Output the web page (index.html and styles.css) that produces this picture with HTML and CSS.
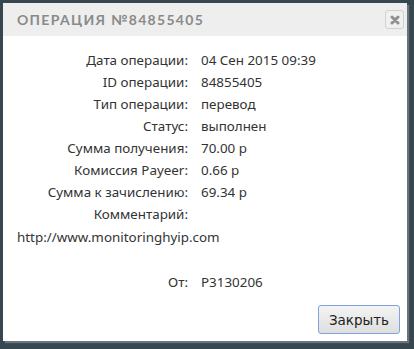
FILE: index.html
```html
<!DOCTYPE html>
<html>
<head>
<meta charset="utf-8">
<link rel="stylesheet" href="styles.css">
</head>
<body>
<div class="dialog">
  <div class="header">
    <span class="title">ОПЕРАЦИЯ №84855405</span>
    <span class="close">
      <svg width="10" height="10" viewBox="0 0 10 10"><path d="M2 2L8 8M8 2L2 8" stroke="#8f8f8f" stroke-width="3" stroke-linecap="round"/></svg>
    </span>
  </div>
  <div class="body">
    <div class="grid">
      <div class="lbl">Дата операции:</div><div class="val">04 Сен 2015 09:39</div>
      <div class="lbl">ID операции:</div><div class="val">84855405</div>
      <div class="lbl">Тип операции:</div><div class="val">перевод</div>
      <div class="lbl">Статус:</div><div class="val">выполнен</div>
      <div class="lbl">Сумма получения:</div><div class="val">70.00 р</div>
      <div class="lbl">Комиссия Payeer:</div><div class="val">0.66 р</div>
      <div class="lbl">Сумма к зачислению:</div><div class="val">69.34 р</div>
      <div class="lbl">Комментарий:</div><div class="val"></div>
    </div>
    <div class="comment">http://www.monitoringhyip.com</div>
    <div class="grid from">
      <div class="lbl">От:</div><div class="val">P3130206</div>
    </div>
  </div>
  <div class="footer">
    <button class="btn">Закрыть</button>
  </div>
</div>
</body>
</html>
```
FILE: styles.css
```css
html, body {
  margin: 0;
  padding: 0;
}
body {
  background: #37474f;
  width: 414px;
  height: 349px;
  overflow: hidden;
  font-family: "Noto Sans", "Open Sans", sans-serif;
}
.dialog {
  margin: 3px 0 0 3px;
  width: 404px;
  height: 338px;
  background: #ffffff;
  box-shadow: 2px 2px 1px rgba(255, 255, 255, 0.25);
  display: flex;
  flex-direction: column;
}
.header {
  height: 33px;
  background: #eeeeee;
  display: flex;
  align-items: center;
  justify-content: space-between;
  padding: 0 3px 0 14px;
}
.title {
  font-family: "Lato", "Noto Sans", sans-serif;
  font-size: 14px;
  font-weight: bold;
  letter-spacing: 1.3px;
  color: #8a8a8a;
}
.close {
  width: 17px;
  height: 17px;
  border: 1px solid #d0d0d0;
  border-radius: 3px;
  display: flex;
  align-items: center;
  justify-content: center;
  background: #f0f0f0;
}
.body {
  flex: 1;
  padding-top: 13px;
  color: #333333;
  font-size: 13.4px;
}
.grid {
  display: grid;
  grid-template-columns: 185px 1fr;
  column-gap: 13px;
  grid-auto-rows: 22px;
  align-items: center;
}
.lbl {
  text-align: right;
}
.comment {
  height: 24px;
  line-height: 24px;
  padding-left: 14px;
}
.from {
  margin-top: 22px;
}
.footer {
  display: flex;
  justify-content: flex-end;
  padding: 0 7px 7px 0;
}
.btn {
  width: 82px;
  height: 29px;
  border: 1px solid #7fa2e0;
  border-radius: 3px;
  background: linear-gradient(#f4f4f4, #dedede);
  font-family: "DejaVu Sans", sans-serif;
  font-size: 13.5px;
  color: #222222;
  padding: 0;
}
```
